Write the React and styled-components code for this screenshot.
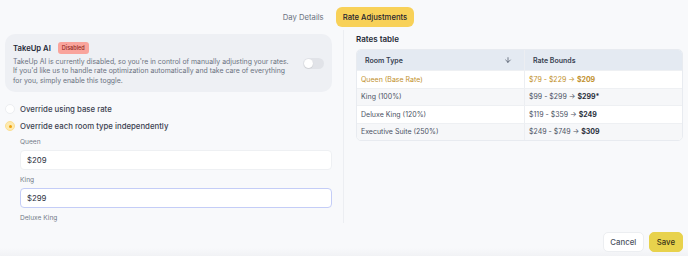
import React from "react";
import styled, { createGlobalStyle } from "styled-components";
import { ArrowDown } from "lucide-react";

const GlobalStyle = createGlobalStyle`
  html, body { margin: 0; padding: 0; background: #f8f9fb; }
  body { font-family: Inter, "Noto Sans", sans-serif; -webkit-font-smoothing: antialiased; }
  * { box-sizing: border-box; }
`;

const Page = styled.div`
  width: 688px;
  height: 256px;
  display: flex;
  flex-direction: column;
  background: #f8f9fb;
  overflow: hidden;
`;

const TabBar = styled.div`
  display: flex;
  justify-content: center;
  gap: 5px;
  padding-top: 7px;
  padding-left: 2px;
`;

const Tab = styled.div`
  height: 20px;
  padding: 0 7px;
  display: flex;
  align-items: center;
  border-radius: 6px;
  font-size: 7.7px;
  font-weight: ${(p) => (p.$active ? 500 : 400)};
  color: ${(p) => (p.$active ? "#1f2430" : "#6b7280")};
  background: ${(p) => (p.$active ? "#f8d158" : "transparent")};
`;

const Body = styled.div`
  display: flex;
  margin-top: 3px;
  height: 193px;
  padding: 0 5px;
`;

const LeftCol = styled.div`
  width: 327px;
  flex: none;
  padding-top: 4px;
  overflow: hidden;
  display: flex;
  flex-direction: column;
`;

const Divider = styled.div`
  width: 1px;
  background: #eceef2;
  margin: 0 12px 0 11px;
`;

const RightCol = styled.div`
  flex: 1;
  padding-top: 4px;
`;

const Card = styled.div`
  background: #eef0f4;
  border-radius: 10px;
  padding: 8px 8px 7px 8px;
  display: flex;
  align-items: center;
  justify-content: space-between;
`;

const CardText = styled.div`
  flex: none;
`;

const TitleRow = styled.div`
  display: flex;
  align-items: center;
  gap: 7px;
  height: 12px;
`;

const CardTitle = styled.span`
  font-size: 7.7px;
  font-weight: 600;
  color: #1f2937;
`;

const Badge = styled.span`
  height: 12px;
  padding: 0 4px;
  display: inline-flex;
  align-items: center;
  border-radius: 3px;
  background: #f9a49c;
  color: #8f2a22;
  font-size: 5.5px;
  font-weight: 500;
`;

const Desc = styled.p`
  margin: 2.5px 0 0 0;
  font-size: 6.9px;
  line-height: 9.6px;
  color: #6b7280;
  white-space: nowrap;
`;

const Toggle = styled.div`
  width: 21px;
  height: 11px;
  border-radius: 6px;
  background: #e1e3e8;
  flex: none;
  position: relative;
  &::after {
    content: "";
    position: absolute;
    left: 1px;
    top: 1px;
    width: 9px;
    height: 9px;
    border-radius: 50%;
    background: #fff;
    box-shadow: 0 0.5px 1px rgba(0,0,0,0.15);
  }
`;

const RadioGroup = styled.div`
  display: flex;
  flex-direction: column;
  gap: 7px;
  margin-top: 12px;
`;

const RadioRow = styled.label`
  display: flex;
  align-items: center;
  gap: 5px;
  height: 10px;
  font-size: 7.8px;
  font-weight: 500;
  color: #3b4150;
`;

const RadioDot = styled.span`
  width: 10px;
  height: 10px;
  border-radius: 50%;
  flex: none;
  display: flex;
  align-items: center;
  justify-content: center;
  background: ${(p) => (p.$checked ? "#fdeab0" : "#fff")};
  border: 1px solid ${(p) => (p.$checked ? "#fbdf93" : "#eceef1")};
  &::after {
    content: "";
    display: ${(p) => (p.$checked ? "block" : "none")};
    width: 3px;
    height: 3px;
    border-radius: 50%;
    background: #f0a20c;
  }
`;

const Fields = styled.div`
  display: flex;
  flex-direction: column;
  padding-left: 15px;
  margin-top: 6.5px;
  gap: 6px;
`;

const Field = styled.div`
  display: flex;
  flex-direction: column;
  gap: 2.5px;
`;

const FieldLabel = styled.span`
  font-size: 6.6px;
  line-height: 9.5px;
  color: #737a87;
`;

const Input = styled.div`
  height: 20px;
  border-radius: 4px;
  background: #fff;
  border: 1px solid ${(p) => (p.$focused ? "#c4cdf7" : "#eef0f3")};
  display: flex;
  align-items: center;
  padding-left: 6px;
  font-size: 7.8px;
  color: #2b3040;
`;

const SectionTitle = styled.div`
  font-size: 8px;
  line-height: 11px;
  font-weight: 600;
  color: #252a36;
  margin-bottom: 4px;
`;

const Table = styled.div`
  border: 1px solid #e8ebf0;
  border-radius: 5px;
  overflow: hidden;
  background: #fff;
`;

const Row = styled.div`
  display: grid;
  grid-template-columns: 167px 1fr;
  height: ${(p) => (p.$head ? "20px" : "17.5px")};
  background: ${(p) => (p.$head ? "#e4eaf2" : p.$alt ? "#f6f7f9" : "#fff")};
  border-top: ${(p) => (p.$head ? "none" : "1px solid #eef0f3")};
`;

const Cell = styled.div`
  display: flex;
  align-items: center;
  justify-content: space-between;
  padding: 0 ${(p) => (p.$head ? "12px 0 8px" : "4px")};
  font-size: 7px;
  font-weight: ${(p) => (p.$head ? 600 : 400)};
  color: ${(p) => (p.$head ? "#374151" : p.$gold ? "#c1902b" : "#4b5263")};
  border-left: ${(p) => (p.$right ? "1px solid #eceef2" : "none")};
`;

const Strong = styled.b`
  font-weight: 700;
  color: ${(p) => (p.$gold ? "#c1902b" : "#2a303c")};
`;

const Footer = styled.div`
  flex: 1;
  display: flex;
  justify-content: flex-end;
  align-items: flex-start;
  gap: 5px;
  padding: 9px 5px 0 5px;
  background: linear-gradient(to bottom, #f8f9fb 0, #f8f9fb 25px, #f1f2f5 33px);
`;

const Button = styled.button`
  height: 20px;
  padding: 0 ${(p) => (p.$primary ? "7px" : "6.5px")};
  border-radius: 5px;
  border: 1px solid ${(p) => (p.$primary ? "#e8d24c" : "#eceef1")};
  background: ${(p) => (p.$primary ? "#e8d24c" : "#fff")};
  color: ${(p) => (p.$primary ? "#3a3318" : "#4b5261")};
  font-family: inherit;
  font-size: 7.8px;
  font-weight: 500;
`;

const rows = [
  { name: "Queen (Base Rate)", range: "$79 - $229", val: "$209", gold: true },
  { name: "King (100%)", range: "$99 - $299", val: "$299*" },
  { name: "Deluxe King (120%)", range: "$119 - $359", val: "$249" },
  { name: "Executive Suite (250%)", range: "$249 - $749", val: "$309" },
];

export default function App() {
  return (
    <>
      <GlobalStyle />
      <Page>
        <TabBar>
          <Tab>Day Details</Tab>
          <Tab $active>Rate Adjustments</Tab>
        </TabBar>
        <Body>
          <LeftCol>
            <Card>
              <CardText>
                <TitleRow>
                  <CardTitle>TakeUp AI</CardTitle>
                  <Badge>Disabled</Badge>
                </TitleRow>
                <Desc>
                  TakeUp AI is currently disabled, so you're in control of manually adjusting your rates.
                  <br />
                  If you'd like us to handle rate optimization automatically and take care of everything
                  <br />
                  for you, simply enable this toggle.
                </Desc>
              </CardText>
              <Toggle />
            </Card>
            <RadioGroup>
              <RadioRow>
                <RadioDot />
                Override using base rate
              </RadioRow>
              <RadioRow>
                <RadioDot $checked />
                Override each room type independently
              </RadioRow>
            </RadioGroup>
            <Fields>
              <Field>
                <FieldLabel>Queen</FieldLabel>
                <Input>$209</Input>
              </Field>
              <Field>
                <FieldLabel>King</FieldLabel>
                <Input $focused>$299</Input>
              </Field>
              <Field>
                <FieldLabel>Deluxe King</FieldLabel>
              </Field>
            </Fields>
          </LeftCol>
          <Divider />
          <RightCol>
            <SectionTitle>Rates table</SectionTitle>
            <Table>
              <Row $head>
                <Cell $head>
                  Room Type
                  <ArrowDown size={8} strokeWidth={2} color="#374151" />
                </Cell>
                <Cell $head $right>Rate Bounds</Cell>
              </Row>
              {rows.map((r, i) => (
                <Row key={r.name} $alt={i % 2 === 1}>
                  <Cell $gold={r.gold}>{r.name}</Cell>
                  <Cell $right $gold={r.gold}>
                    <span>
                      {r.range} → <Strong $gold={r.gold}>{r.val}</Strong>
                    </span>
                  </Cell>
                </Row>
              ))}
            </Table>
          </RightCol>
        </Body>
        <Footer>
          <Button>Cancel</Button>
          <Button $primary>Save</Button>
        </Footer>
      </Page>
    </>
  );
}
